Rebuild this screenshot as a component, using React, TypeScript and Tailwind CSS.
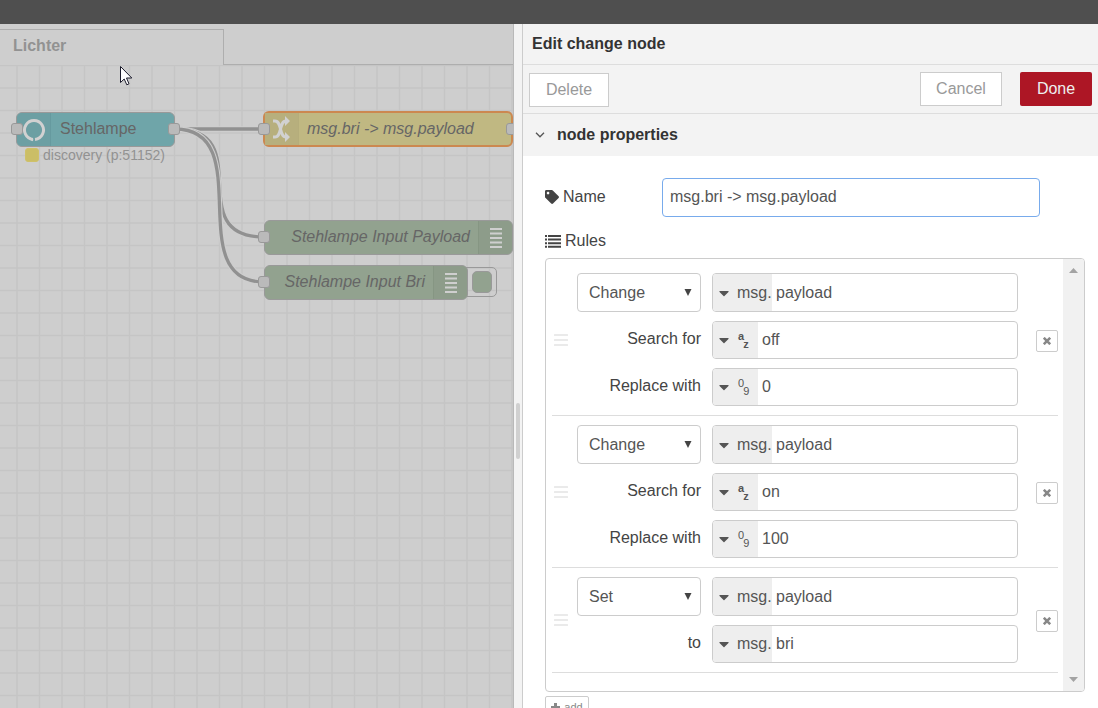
import type { ReactNode } from 'react'
import { FaCaretDown, FaTag } from 'react-icons/fa'

type Kind = 'msg' | 'str' | 'num'

interface Field {
  label?: string
  kind: Kind
  value: string
}

interface Rule {
  action: string
  fields: Field[]
}

const rules: Rule[] = [
  {
    action: 'Change',
    fields: [
      { kind: 'msg', value: 'payload' },
      { label: 'Search for', kind: 'str', value: 'off' },
      { label: 'Replace with', kind: 'num', value: '0' },
    ],
  },
  {
    action: 'Change',
    fields: [
      { kind: 'msg', value: 'payload' },
      { label: 'Search for', kind: 'str', value: 'on' },
      { label: 'Replace with', kind: 'num', value: '100' },
    ],
  },
  {
    action: 'Set',
    fields: [
      { kind: 'msg', value: 'payload' },
      { label: 'to', kind: 'msg', value: 'bri' },
    ],
  },
]

const wires = [
  'M175 64H264',
  'M175 64C259 64 180 172 264 172',
  'M175 64C259 64 180 217 264 217',
]

function Port({ className }: { className: string }) {
  return <span className={`absolute h-3 w-3 rounded-[3px] border border-[#999] bg-[#bababa] ${className}`} />
}

function Node({ className, children }: { className: string; children: ReactNode }) {
  return <div className={`absolute flex items-center rounded-md text-base text-[#666] ${className}`}>{children}</div>
}

function DebugIcon() {
  return (
    <span className="flex h-full w-[34px] items-center justify-center rounded-r-[5px] border-l border-[#869683] bg-[#8d9c8a]">
      <svg width="12" height="22" viewBox="0 0 12 22" stroke="#cfcfcf" strokeWidth="1.8">
        <path d="M0 2h12M0 6.5h12M0 11h12M0 15.5h12M0 20h12" />
      </svg>
    </span>
  )
}

function Workspace() {
  const lines = Array.from({ length: 90 }, (_, i) => i * 22.5)
  return (
    <main className="relative flex min-w-0 flex-col overflow-hidden bg-[#cecece]">
      <div className="flex h-[41px] items-end">
        <button className="h-9 w-56 border-t border-r border-[#aeaeae] px-[13px] pb-1 text-left text-base font-bold text-[#929292]">
          Lichter
        </button>
        <div className="h-9 flex-1 border-b border-[#aeaeae]" />
      </div>
      <div className="relative flex-1">
        <svg className="absolute inset-0 h-full w-full" fill="none">
          <g stroke="#c5c5c5" strokeWidth="1.4">
            {lines.map((n) => (
              <line key={`v${n}`} x1={n + 17} x2={n + 17} y1="0" y2="2000" />
            ))}
            {lines.map((n) => (
              <line key={`h${n}`} x1="0" x2="2000" y1={n + 0.5} y2={n + 0.5} />
            ))}
          </g>
          {wires.map((d) => (
            <g key={d}>
              <path d={d} stroke="#cecece" strokeWidth="5.5" />
              <path d={d} stroke="#919191" strokeWidth="3.3" />
            </g>
          ))}
        </svg>

        <Node className="top-[47px] left-4 h-[35px] w-[159px] border border-[#999] bg-[#6fa5a9]">
          <span className="flex h-full w-[34px] items-center justify-center rounded-l-[5px] border-r border-[#669a9f] bg-[#6c9fa3]">
            <svg width="24" height="24" viewBox="0 0 24 24" fill="none" stroke="#d1d1d1" strokeWidth="3">
              <path d="M11 21.5A9.5 9.5 0 1 1 13 21.5" />
              <path d="M7 19.5L11 22.5" strokeWidth="2" />
            </svg>
          </span>
          <span className="ml-[9px] pb-0.5">Stehlampe</span>
          <Port className="top-2.5 -left-1.5" />
          <Port className="top-2.5 -right-1.5" />
        </Node>
        <div className="absolute top-[82px] left-[25px] flex items-center gap-1 text-sm leading-4 text-[#929292]">
          <span className="h-3.5 w-3.5 rounded-[3px] border border-[#cfc169] bg-[#cbbe66]" />
          discovery (p:51152)
        </div>

        <Node className="top-[46px] left-[263px] h-9 w-[250px] border-2 border-[#cc8850] bg-[#c0b882]">
          <span className="flex h-full w-[34px] items-center justify-center border-r border-[#b5ad7b] bg-[#b7af7d]">
            <svg width="20" height="28" viewBox="0 0 20 28" fill="none" stroke="#d1d1d1" strokeWidth="3">
              <path d="M1 6H3C10 6 7 22 14 22M1 22H3C10 22 7 6 14 6" />
              <path d="M13 1L18 6L13 11ZM13 17L18 22L13 27Z" fill="#d1d1d1" stroke="none" />
            </svg>
          </span>
          <span className="ml-2 italic">msg.bri -&gt; msg.payload</span>
          <Port className="top-2.5 -left-[7px]" />
          <Port className="top-2.5 -right-[7px]" />
        </Node>

        <Node className="top-[155px] left-[264px] h-[35px] w-[249px] justify-end border border-[#999] bg-[#92a28f]">
          <span className="mr-2 pb-0.5 italic">Stehlampe Input Payload</span>
          <DebugIcon />
          <Port className="top-2.5 -left-[7px]" />
        </Node>

        <div className="absolute top-[202px] left-[460px] flex h-[30px] w-[37px] items-center justify-end rounded-[5px] border border-[#999] pr-1">
          <button aria-label="Toggle debug output" className="h-[22px] w-5 rounded-[5px] border border-[#999] bg-[#92a28f]" />
        </div>
        <Node className="top-[200px] left-[264px] h-[35px] w-[204px] justify-end border border-[#999] bg-[#92a28f]">
          <span className="mr-2 pb-0.5 italic">Stehlampe Input Bri</span>
          <DebugIcon />
          <Port className="top-2.5 -left-[7px]" />
        </Node>

        <svg className="absolute top-0 left-[120px]" width="13" height="21" viewBox="0 0 13 21">
          <path d="M.5 1.5V17.5L4.2 14L6.8 19.8L9 18.8L6.5 13H11.8Z" fill="#fff" stroke="#1b1b2b" />
        </svg>
      </div>
      <div className="absolute inset-y-0 right-0 w-px bg-[#b9b9b9]" />
    </main>
  )
}

function TypeIcon({ kind }: { kind: Kind }) {
  if (kind === 'msg') return <span>msg.</span>
  const [first, last] = kind === 'str' ? ['a', 'z'] : ['0', '9']
  return (
    <span className={`ml-px flex text-[11px] leading-3 ${kind === 'str' ? 'font-bold' : ''}`}>
      <span className="pb-2">{first}</span>
      <span className="-ml-px pt-2">{last}</span>
    </span>
  )
}

function TypedInput({ field, tall }: { field: Field; tall: boolean }) {
  const msg = field.kind === 'msg'
  return (
    <div className={`flex min-w-0 flex-1 overflow-hidden rounded border border-[#ccc] ${tall ? 'h-[39px]' : 'h-[38px]'}`}>
      <button
        type="button"
        aria-label="Value type"
        className={`flex shrink-0 items-center gap-2 bg-[#eee] pl-1.5 text-[#555] ${msg ? 'w-[59px]' : 'w-[45px]'}`}
      >
        <FaCaretDown className="h-4 w-2.5 shrink-0" />
        <TypeIcon kind={field.kind} />
      </button>
      <input
        aria-label={field.label ?? 'Property'}
        defaultValue={field.value}
        className="min-w-0 flex-1 px-1 text-[#555] outline-none"
      />
    </div>
  )
}

function RuleRow({ rule }: { rule: Rule }) {
  return (
    <li className="flex items-center border-b border-[#ddd] py-[9px]">
      <svg className="ml-0.5 shrink-0" width="14" height="12" viewBox="0 0 14 12" fill="#eaeaea">
        <rect width="14" height="2" rx=".5" />
        <rect y="5" width="14" height="2" rx=".5" />
        <rect y="10" width="14" height="2" rx=".5" />
      </svg>
      <div className="ml-[9px] flex min-w-0 flex-1 flex-col gap-[9px]">
        {rule.fields.map((field, i) => (
          <div key={i} className="flex items-center gap-[11px]">
            {i === 0 ? (
              <div className="relative h-[39px] w-[124px] shrink-0">
                <select
                  aria-label="Action"
                  defaultValue={rule.action}
                  className="h-full w-full appearance-none rounded border border-[#ccc] bg-white px-[11px] text-[#555] outline-none"
                >
                  <option>Set</option>
                  <option>Change</option>
                </select>
                <svg className="pointer-events-none absolute top-4 right-[9px]" width="8" height="7" viewBox="0 0 8 7">
                  <path d="M.5 0H7.5L4 7Z" fill="#444" />
                </svg>
              </div>
            ) : (
              <span className="w-[124px] shrink-0 pb-0.5 text-right">{field.label}</span>
            )}
            <TypedInput field={field} tall={i === 0} />
          </div>
        ))}
      </div>
      <button
        type="button"
        aria-label="Remove rule"
        className="mt-0.5 ml-[18px] flex h-[22px] w-[22px] items-center justify-center rounded-xs border border-[#ccc]"
      >
        <svg width="8" height="8" viewBox="0 0 8 8" stroke="#888" strokeWidth="2.6">
          <path d="M.8 .8L7.2 7.2M7.2 .8L.8 7.2" />
        </svg>
      </button>
    </li>
  )
}

function EditTray() {
  return (
    <aside className="flex min-w-0 bg-white">
      <div className="flex w-2 shrink-0 items-center bg-[#f3f3f3] pt-[120px]">
        <span className="ml-0.5 h-14 w-1 rounded-xs bg-[#d0d0d0]" />
      </div>
      <div className="min-w-0 flex-1 border-l border-[#ccc]">
        <h1 className="flex h-[41px] items-center border-b border-[#ddd] bg-[#f3f3f3] px-[9px] font-bold text-[#333]">
          Edit change node
        </h1>
        <div className="flex h-[49px] items-center border-b border-[#ddd] bg-[#f3f3f3] px-1.5">
          <button className="mt-0.5 h-[34px] w-20 border border-[#ccc] bg-white text-[#999]">Delete</button>
          <button className="ml-auto h-[34px] w-[82px] border border-[#ccc] bg-white text-[#999]">Cancel</button>
          <button className="ml-[18px] h-[34px] w-[72px] rounded-xs bg-[#ad1625] text-[#eee]">Done</button>
        </div>
        <button className="flex h-[42px] w-full items-center gap-3 bg-[#f3f3f3] px-3 font-bold text-[#333]">
          <svg width="10" height="6" viewBox="0 0 10 6" fill="none" stroke="#555" strokeWidth="1.3">
            <path d="M1 .8L5 4.8L9 .8" />
          </svg>
          node properties
        </button>
        <form className="pt-[22px] pr-[13px] pl-[22px]">
          <div className="flex items-center">
            <label htmlFor="node-name" className="flex w-[117px] shrink-0 items-center gap-1 pb-0.5">
              <FaTag className="h-3.5 w-3.5" /> Name
            </label>
            <div className="mr-[45px] flex-1">
              <input
                id="node-name"
                autoFocus
                defaultValue="msg.bri -> msg.payload"
                className="h-[39px] w-full rounded border border-[#78abec] px-[7px] pb-0.5 text-[#555] outline-none"
              />
            </div>
          </div>
          <h2 className="mt-3 mb-[5px] flex items-center gap-1">
            <svg width="16" height="13" viewBox="0 0 16 13" fill="currentColor">
              <path d="M0 0h2v2H0zM3 0h13v2H3zM0 3.6h2v2H0zM3 3.6h13v2H3zM0 7.2h2v2H0zM3 7.2h13v2H3zM0 10.8h2v2H0zM3 10.8h13v2H3z" />
            </svg>
            Rules
          </h2>
          <div className="flex overflow-hidden rounded border border-[#ccc]">
            <ol className="min-w-0 flex-1 pt-[5px] pr-[5px] pb-[18px] pl-1.5">
              {rules.map((rule, i) => (
                <RuleRow key={i} rule={rule} />
              ))}
            </ol>
            <div className="flex w-[21px] flex-col items-center justify-between bg-[#f1f1f1] py-[9px]">
              <svg width="9" height="5" viewBox="0 0 9 5" fill="#a3a3a3">
                <path d="M0 5L4.5 0L9 5Z" />
              </svg>
              <svg width="9" height="5" viewBox="0 0 9 5" fill="#a3a3a3">
                <path d="M0 0L4.5 5L9 0Z" />
              </svg>
            </div>
          </div>
          <button
            type="button"
            className="mt-1 flex h-[22px] w-11 items-center justify-center gap-1 rounded-xs border border-[#ccc] text-[11px] leading-4 text-[#888]"
          >
            <svg width="9" height="9" viewBox="0 0 9 9" fill="currentColor">
              <path d="M3 0h3v3h3v3H6v3H3V6H0V3h3z" />
            </svg>
            add
          </button>
        </form>
      </div>
    </aside>
  )
}

export default function App() {
  return (
    <div className="flex h-screen flex-col overflow-hidden bg-white font-['Liberation_Sans',Arial,sans-serif] text-base text-[#444]">
      <header className="h-6 shrink-0 bg-[#4f4f4f]" />
      <div className="grid min-h-0 flex-1 grid-cols-[minmax(0,514fr)_minmax(0,584fr)] overflow-hidden">
        <Workspace />
        <EditTray />
      </div>
    </div>
  )
}
